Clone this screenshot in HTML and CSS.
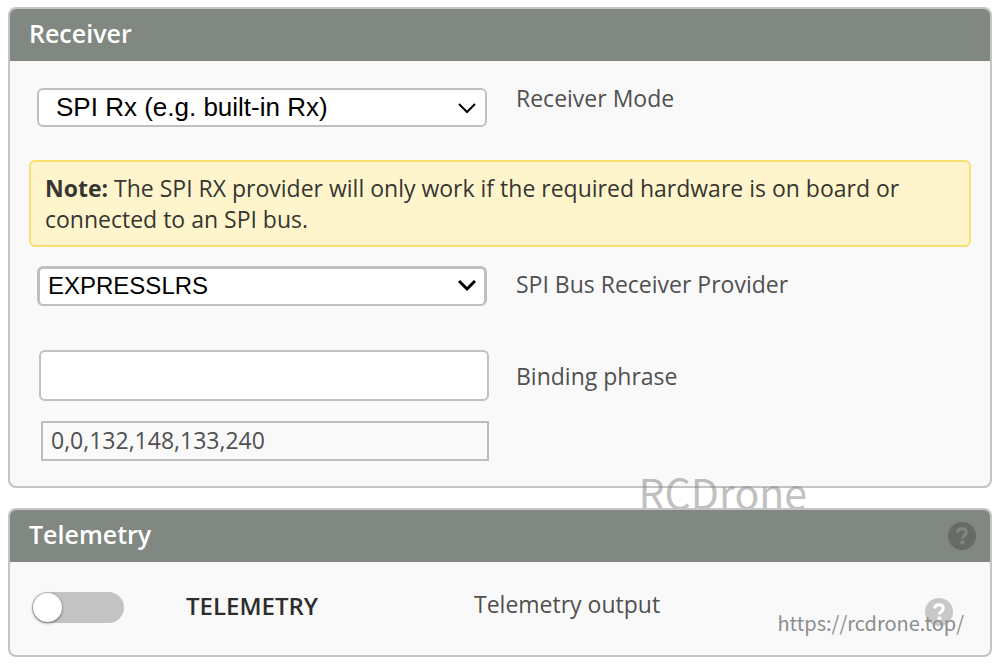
FILE: index.html
```html
<!DOCTYPE html>
<html lang="en">
<head>
<meta charset="utf-8">
<meta name="viewport" content="width=device-width, initial-scale=1">
<title>Receiver</title>
<link rel="stylesheet" href="styles.css">
</head>
<body>
<main class="page">
  <section class="panel receiver">
    <header class="panel-header"><h2 class="panel-title">Receiver</h2></header>
    <div class="panel-body">
      <div class="row">
        <div class="select-wrap">
          <select class="select select-mode" id="mode"><option>SPI Rx (e.g. built-in Rx)</option></select>
          <svg class="chevron" viewBox="0 0 18 12" aria-hidden="true"><path d="M1 2l8 8 8-8" stroke-width="2"/></svg>
        </div>
        <label class="label label-mode" for="mode">Receiver Mode</label>
      </div>
      <p class="note"><strong>Note:</strong> The SPI RX provider will only work if the required hardware is on board or connected to an SPI bus.</p>
      <div class="row">
        <div class="select-wrap">
          <select class="select select-provider" id="provider"><option>EXPRESSLRS</option></select>
          <svg class="chevron" viewBox="0 0 18 12" aria-hidden="true"><path d="M1 1l8 8 8-8" stroke-width="3"/></svg>
        </div>
        <label class="label label-raised" for="provider">SPI Bus Receiver Provider</label>
      </div>
      <div class="row row-phrase">
        <input class="input" id="phrase" type="text">
        <label class="label" for="phrase">Binding phrase</label>
      </div>
      <div class="row row-uid">
        <input class="uid" type="text" value="0,0,132,148,133,240" aria-label="Binding UID" readonly>
      </div>
    </div>
    <span class="brand">RCDrone</span>
  </section>

  <section class="panel telemetry">
    <header class="panel-header">
      <h2 class="panel-title">Telemetry</h2>
      <button class="help help-dark" type="button" aria-label="Telemetry help">
        <svg viewBox="0 0 28 28" aria-hidden="true"><circle cx="14" cy="14" r="14"/><path d="M9.500 10.500C10 7.800 11.800 6.800 14 6.800c2.600 0 4.300 1.400 4.300 3.500 0 3.200-4 3.100-4 6.200"/><rect x="12.400" y="18.500" width="3.800" height="3.800" rx="1.200"/></svg>
      </button>
    </header>
    <div class="feature">
      <input class="switch" id="telemetry" type="checkbox" role="switch">
      <label class="feature-name" for="telemetry">TELEMETRY</label>
      <span class="feature-text">Telemetry output</span>
      <button class="help help-light" type="button" aria-label="Telemetry output help">
        <svg viewBox="0 0 28 28" aria-hidden="true"><circle cx="14" cy="14" r="14"/><path d="M9.500 10.500C10 7.800 11.800 6.800 14 6.800c2.600 0 4.300 1.400 4.300 3.500 0 3.200-4 3.100-4 6.200"/><rect x="12.400" y="18.500" width="3.800" height="3.800" rx="1.200"/></svg>
      </button>
    </div>
    <a class="site" href="https://rcdrone.top/">https://rcdrone.top/</a>
  </section>
</main>
</body>
</html>
```

FILE: styles.css
```css
* {
  box-sizing: border-box;
}

body {
  margin: 0;
  background: #fff;
  color: #505050;
  font-family: "Open Sans", sans-serif;
  font-size: 23px;
  line-height: 32px;
}

.page {
  display: flex;
  flex-direction: column;
  gap: 20px;
  padding: 7px 8px;
}

.panel {
  position: relative;
  border: 2px solid #c3c4c3;
  border-radius: 8px;
  background: #f9f9f9;
}

.telemetry {
  z-index: 1;
}

.panel-header {
  display: flex;
  align-items: center;
  justify-content: space-between;
  height: 52px;
  padding: 0 14px 0 19px;
  border-radius: 6px 6px 0 0;
  background: #818882;
}

.panel-title {
  margin: 0;
  padding-bottom: 4px;
  color: #fff;
  font-size: 25px;
  font-weight: 600;
}

.panel-body {
  padding: 27px 19px 25px;
}

.row {
  display: grid;
  grid-template-columns: 450px 1fr;
  column-gap: 29px;
  align-items: center;
  padding-left: 8px;
}

.select-wrap {
  display: grid;
  align-items: center;
}

.select,
.chevron {
  grid-area: 1 / 1;
}

.select {
  width: 100%;
  height: 39px;
  border: 2px solid #bfbfbf;
  border-radius: 6px;
  appearance: none;
  background: #fff;
  color: #000;
  font-family: "Liberation Sans", Arial, sans-serif;
}

.select-mode {
  padding: 0 17px 2px;
  font-size: 26px;
}

.select-provider {
  height: 40px;
  padding: 0 8px 3px;
  border-width: 3px 3px 2px;
  font-size: 24px;
}

.chevron {
  justify-self: end;
  width: 18px;
  height: 12px;
  margin-right: 11px;
  fill: none;
  stroke: #000;
  pointer-events: none;
}

.label-mode {
  align-self: start;
  margin-top: -6px;
}

.label-raised {
  padding-bottom: 4px;
}

.note {
  margin: 33px 0 19px;
  padding: 11px 14px 10px;
  border: 2px solid #f7e070;
  border-radius: 6px;
  background: #fff5cc;
  color: #363632;
  line-height: 31px;
}

.note strong {
  font-weight: 700;
}

.row-phrase {
  margin-top: 44px;
  padding-left: 10px;
  column-gap: 27px;
}

.input {
  width: 100%;
  height: 51px;
  border: 2px solid #c0c0c0;
  border-radius: 6px;
  background: #fff;
  font: inherit;
}

.row-uid {
  margin-top: 20px;
  padding-left: 12px;
  grid-template-columns: 448px 1fr;
}

.uid {
  width: 100%;
  height: 40px;
  padding: 0 8px 2px;
  border: 2px solid #bdbdbd;
  border-radius: 0;
  background: #f9f9f9;
  color: #505050;
  font: inherit;
}

.brand {
  position: absolute;
  right: 183px;
  bottom: -35px;
  color: rgba(130, 130, 130, 0.5);
  font-family: "Noto Sans CJK SC", sans-serif;
  font-size: 41px;
  line-height: 60px;
}

.feature {
  display: grid;
  grid-template-columns: 154px 288px 1fr 28px;
  align-items: center;
  min-height: 93px;
  padding: 0 37px 3px 22px;
}

.switch {
  display: flex;
  align-items: center;
  width: 92px;
  height: 31px;
  margin: 0;
  border-radius: 16px;
  appearance: none;
  background: #c3c3c3;
}

.switch::before {
  content: "";
  width: 29px;
  height: 29px;
  margin: 0 1px;
  border-radius: 50%;
  background: #fff;
  box-shadow: 0 1px 3px rgba(0, 0, 0, 0.5);
}

.switch:checked {
  justify-content: flex-end;
}

.feature-name {
  padding-bottom: 3px;
  color: #2d2d2d;
  font-size: 24px;
  font-weight: 600;
}

.feature-text {
  padding-bottom: 7px;
}

.help {
  width: 28px;
  height: 28px;
  padding: 0;
  border: 0;
  background: none;
}

.help svg {
  display: block;
}

.help path {
  fill: none;
  stroke-width: 3;
}

.help-dark circle {
  fill: #666b67;
}

.help-dark path {
  stroke: #818882;
}

.help-dark rect {
  fill: #818882;
}

.help-light {
  margin-top: 10px;
}

.help-light circle {
  fill: #c8c8c8;
}

.help-light path {
  stroke: #fff;
}

.help-light rect {
  fill: #fff;
}

.site {
  position: absolute;
  right: 26px;
  bottom: 16px;
  color: #8d8d8d;
  font-family: "Noto Sans CJK SC", sans-serif;
  font-size: 20px;
  text-decoration: none;
}
```
